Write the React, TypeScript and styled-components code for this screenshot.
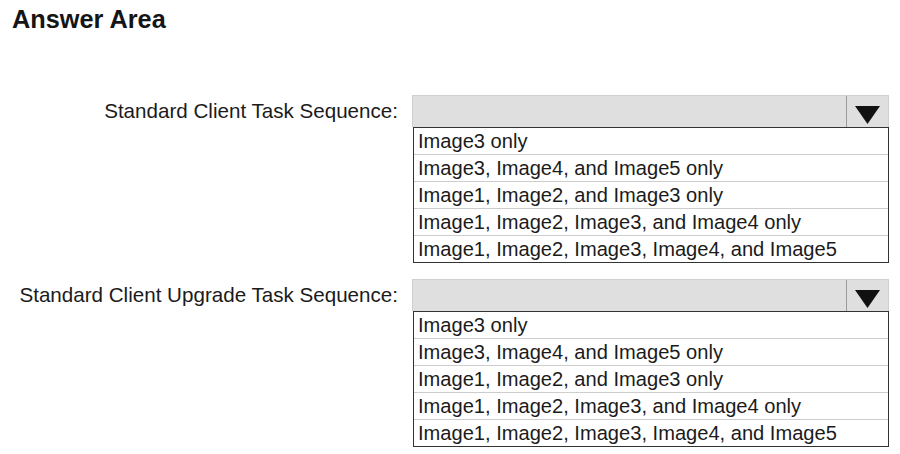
import React from "react";
import styled, { createGlobalStyle } from "styled-components";

const GlobalStyle = createGlobalStyle`
  html, body { margin: 0; padding: 0; background: #ffffff; }
  body { font-family: "Liberation Sans", Arial, sans-serif; color: #1b1b1b; }
`;

const Page = styled.div`
  width: 900px;
  height: 454px;
  box-sizing: border-box;
  padding: 7px 0 0 12px;
  background: #ffffff;
`;

const Title = styled.h1`
  margin: 0;
  font-size: 25.3px;
  line-height: 25px;
  font-weight: 700;
  color: #151515;
`;

const Form = styled.div`
  margin-top: 63px;
  display: flex;
  flex-direction: column;
  gap: 16px;
`;

const FieldRow = styled.div`
  display: grid;
  grid-template-columns: 386px 477px;
  column-gap: 14px;
  align-items: start;
`;

const Label = styled.div`
  text-align: right;
  font-size: 20.6px;
  line-height: 32px;
  height: 32px;
  white-space: nowrap;
  color: #1b1b1b;
`;

const SelectColumn = styled.div`
  display: flex;
  flex-direction: column;
`;

const SelectBox = styled.div`
  height: 32px;
  box-sizing: border-box;
  display: flex;
  background: #dfdfdf;
  border: 1px solid #cfcfcf;
  border-bottom: none;
`;

const SelectValue = styled.div`
  flex: 1;
`;

const ArrowButton = styled.div`
  width: 42px;
  border-left: 1.5px solid #9a9a9a;
  display: flex;
  align-items: center;
  justify-content: center;
  padding-top: 6px;
  box-sizing: border-box;
`;

const OptionList = styled.div`
  margin-left: 1px;
  border: 1.5px solid #333333;
  background: #ffffff;
  display: flex;
  flex-direction: column;
`;

const OptionItem = styled.div<{ $first?: boolean }>`
  height: 26px;
  line-height: 26px;
  padding-left: 4px;
  font-size: 20.1px;
  white-space: nowrap;
  color: #1b1b1b;
  border-top: ${(p) => (p.$first ? "none" : "1px solid #cdcdcd")};
`;

const options = [
  "Image3 only",
  "Image3, Image4, and Image5 only",
  "Image1, Image2, and Image3 only",
  "Image1, Image2, Image3, and Image4 only",
  "Image1, Image2, Image3, Image4, and Image5",
];

const Arrow = () => (
  <svg width="25" height="18" viewBox="0 0 25 18">
    <polygon points="0,0 25,0 12.5,18" fill="#111111" />
  </svg>
);

const Dropdown: React.FC<{ label: string }> = ({ label }) => (
  <FieldRow>
    <Label>{label}</Label>
    <SelectColumn>
      <SelectBox>
        <SelectValue />
        <ArrowButton>
          <Arrow />
        </ArrowButton>
      </SelectBox>
      <OptionList>
        {options.map((o, i) => (
          <OptionItem key={o} $first={i === 0}>
            {o}
          </OptionItem>
        ))}
      </OptionList>
    </SelectColumn>
  </FieldRow>
);

export default function App() {
  return (
    <>
      <GlobalStyle />
      <Page>
        <Title>Answer Area</Title>
        <Form>
          <Dropdown label="Standard Client Task Sequence:" />
          <Dropdown label="Standard Client Upgrade Task Sequence:" />
        </Form>
      </Page>
    </>
  );
}
